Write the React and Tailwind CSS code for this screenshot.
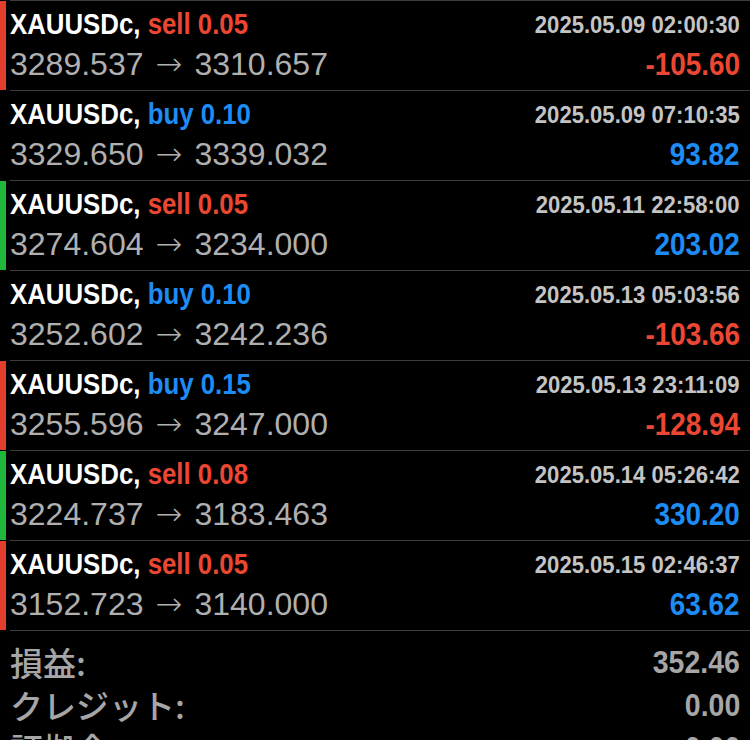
const trades = [
  { side: "sell", lots: "0.05", time: "2025.05.09 02:00:30", open: "3289.537", close: "3310.657", profit: "-105.60", bar: "red" },
  { side: "buy", lots: "0.10", time: "2025.05.09 07:10:35", open: "3329.650", close: "3339.032", profit: "93.82", bar: null },
  { side: "sell", lots: "0.05", time: "2025.05.11 22:58:00", open: "3274.604", close: "3234.000", profit: "203.02", bar: "green" },
  { side: "buy", lots: "0.10", time: "2025.05.13 05:03:56", open: "3252.602", close: "3242.236", profit: "-103.66", bar: null },
  { side: "buy", lots: "0.15", time: "2025.05.13 23:11:09", open: "3255.596", close: "3247.000", profit: "-128.94", bar: "red" },
  { side: "sell", lots: "0.08", time: "2025.05.14 05:26:42", open: "3224.737", close: "3183.463", profit: "330.20", bar: "green" },
  { side: "sell", lots: "0.05", time: "2025.05.15 02:46:37", open: "3152.723", close: "3140.000", profit: "63.62", bar: "red" },
];

const summary = [
  { label: "損益:", value: "352.46" },
  { label: "クレジット:", value: "0.00" },
  { label: "証拠金:", value: "0.00" },
];

// no condensed face installed, so squeeze the bold sans horizontally
const cond = "inline-block font-['Liberation_Sans',Arial,sans-serif] font-bold";

const TradeRow = ({ t }) => {
  const barColor =
    t.bar === "red" ? "bg-[#e23d2d]" : t.bar === "green" ? "bg-[#1fb83a]" : "bg-transparent";
  const sideColor = t.side === "sell" ? "text-[#ec4733]" : "text-[#1e8cf5]";
  const profitColor = t.profit.startsWith("-") ? "text-[#ec4733]" : "text-[#1e8cf5]";

  return (
    <div className="flex h-[90px]">
      <div className="w-[10px] pt-px">
        <div className={`w-[6px] h-full ${barColor}`} />
      </div>
      <div className="flex-1 border-t border-[#3c3c3c] pr-[10px] pt-[5px]">
        <div className="flex items-baseline justify-between leading-[36px]">
          <span className={`${cond} text-[30px] text-white origin-left scale-x-[0.86]`}>
            XAUUSDc, <span className={sideColor}>{t.side} {t.lots}</span>
          </span>
          <span className={`${cond} text-[24px] text-[#c4c4c4] origin-right scale-x-[0.92] relative -top-[1px]`}>
            {t.time}
          </span>
        </div>
        <div className="flex items-baseline justify-between leading-[40px]">
          <span className="font-['Liberation_Sans',Arial,sans-serif] text-[32px] text-[#b0b0b0]">
            {t.open}
            <span className="inline-block w-[51px] text-center font-['DejaVu_Sans',sans-serif] font-extralight">→</span>
            {t.close}
          </span>
          <span className={`${cond} text-[31px] ${profitColor} origin-right scale-x-[0.9]`}>
            {t.profit}
          </span>
        </div>
      </div>
    </div>
  );
};

const App = () => {
  return (
    <div className="w-[750px] h-[740px] overflow-hidden bg-black">
      {trades.map((t, i) => (
        <TradeRow key={i} t={t} />
      ))}
      <div className="ml-[10px] border-t border-[#3c3c3c] pr-[10px] pt-[10px]">
        {summary.map((s) => (
          <div key={s.label} className="flex items-center justify-between h-[43px]">
            <span className="font-['Noto_Sans_CJK_JP',sans-serif] font-medium text-[33px] leading-[43px] text-[#a6a6a6]">
              {s.label}
            </span>
            <span className={`${cond} text-[32px] leading-[43px] text-[#a6a6a6] origin-right scale-x-[0.89]`}>
              {s.value}
            </span>
          </div>
        ))}
      </div>
    </div>
  );
};

export default App;
